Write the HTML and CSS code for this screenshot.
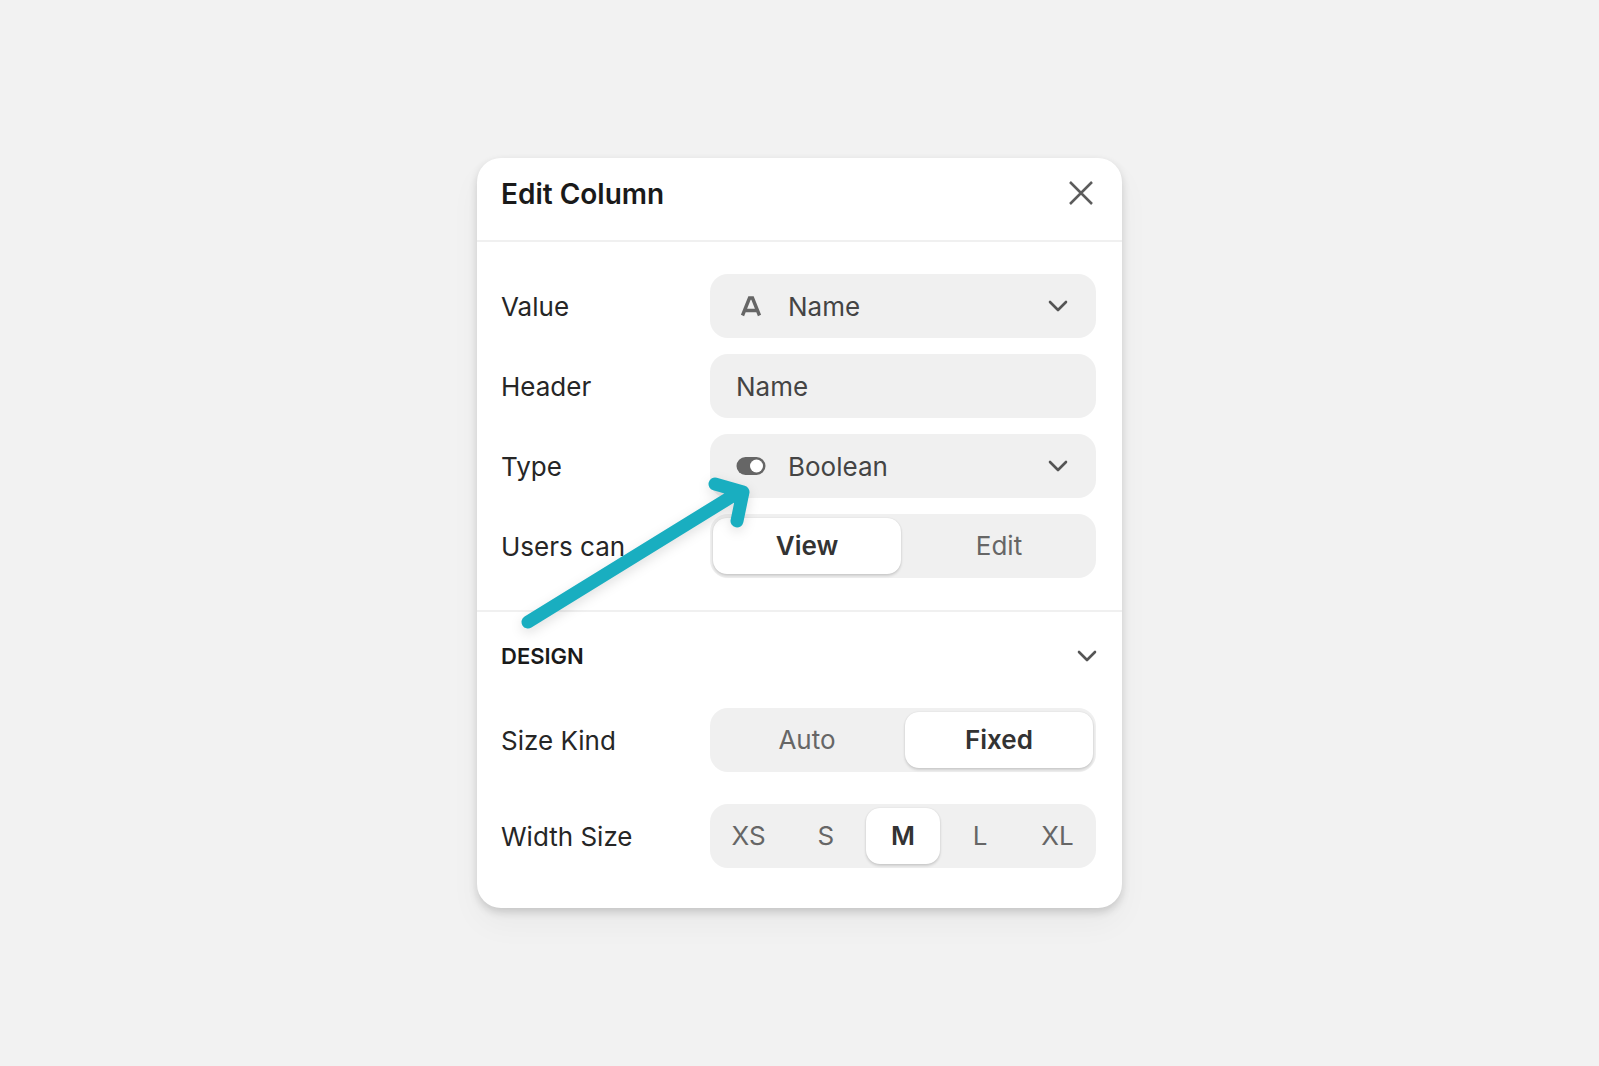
FILE: index.html
```html
<!DOCTYPE html>
<html lang="en">
<head>
  <meta charset="UTF-8" />
  <title>Edit Column</title>
  <link rel="stylesheet" href="styles.css">
</head>
<body>
  <div class="panel">
    <div class="panel-head">
      <h2>Edit Column</h2>
      <svg class="close" width="28" height="28" viewBox="0 0 28 28"><path d="M3 3 L25 25 M25 3 L3 25" /></svg>
    </div>

    <div class="section">
      <div class="row">
        <span class="label">Value</span>
        <div class="field">
          <svg class="field-icon" width="30" height="24" viewBox="0 0 30 24"><path d="M6.5 21.5 L13.5 4 H16.5 L23.5 21.5 M9.5 16.5 H20.5" /></svg>
          <span class="field-text">Name</span>
          <svg class="chevron" width="24" height="24" viewBox="0 0 24 24"><path d="M4 8 L12 16 L20 8" /></svg>
        </div>
      </div>
      <div class="row">
        <span class="label">Header</span>
        <div class="field"><span class="field-text">Name</span></div>
      </div>
      <div class="row">
        <span class="label">Type</span>
        <div class="field">
          <svg class="field-icon toggle" width="30" height="20" viewBox="0 0 30 20"><rect x="0.5" y="1" width="29" height="18" rx="9" fill="#666" /><circle cx="20.5" cy="10" r="6.5" fill="#fff" /></svg>
          <span class="field-text">Boolean</span>
          <svg class="chevron" width="24" height="24" viewBox="0 0 24 24"><path d="M4 8 L12 16 L20 8" /></svg>
        </div>
      </div>
      <div class="row">
        <span class="label">Users can</span>
        <div class="segments">
          <span class="segment active">View</span>
          <span class="segment">Edit</span>
        </div>
      </div>
    </div>

    <div class="section design">
      <div class="design-head">
        <span class="design-title">DESIGN</span>
        <svg class="chevron" width="24" height="24" viewBox="0 0 24 24"><path d="M4 8 L12 16 L20 8" /></svg>
      </div>
      <div class="row">
        <span class="label">Size Kind</span>
        <div class="segments">
          <span class="segment">Auto</span>
          <span class="segment active">Fixed</span>
        </div>
      </div>
      <div class="row">
        <span class="label">Width Size</span>
        <div class="segments sizes">
          <span class="segment">XS</span>
          <span class="segment">S</span>
          <span class="segment active">M</span>
          <span class="segment">L</span>
          <span class="segment">XL</span>
        </div>
      </div>
    </div>
  </div>

  <!-- flecha encima del panel -->
  <svg class="arrow" width="260" height="170" viewBox="0 0 260 170">
    <path d="M23 147 L234 17 M210 9 L238 17 L232 46" />
  </svg>
</body>
</html>
```

FILE: styles.css
```css
body {
  margin: 0;
  min-height: 100vh;
  background: #f2f2f2;
  font-family: 'Inter', sans-serif;
  position: relative;
  display: flex;
  justify-content: center;
  align-items: flex-start;
  padding-top: 158px;
  box-sizing: border-box;
}

.panel {
  width: 645px;
  height: 750px;
  background: #fff;
  border-radius: 24px;
  box-shadow: 0 4px 8px rgba(0,0,0,0.16), 0 16px 32px rgba(0,0,0,0.04);
  box-sizing: border-box;
}

.panel-head {
  height: 82px;
  border-bottom: 2px solid #f0f0f0;
  display: flex;
  justify-content: space-between;
  align-items: flex-start;
  padding: 0 27px 0 24px;
}
.panel-head h2 {
  margin: 18px 0 0;
  font-size: 28px;
  line-height: 36px;
  font-weight: 600;
  color: #1a1a1a;
}
.close {
  margin-top: 21px;
}
.close path {
  fill: none;
  stroke: #5c5c5c;
  stroke-width: 2.5;
}

.section {
  padding: 32px 26px 32px 24px;
  display: flex;
  flex-direction: column;
  gap: 16px;
}

.row {
  display: flex;
  align-items: center;
}
.label {
  width: 209px;
  font-size: 26px;
  color: #262626;
  flex-shrink: 0;
}

.field {
  flex: 1;
  height: 64px;
  background: #f0f0f0;
  border-radius: 18px;
  display: flex;
  align-items: center;
  padding: 0 26px;
  gap: 22px;
}
.field-text {
  flex: 1;
  font-size: 26px;
  color: #444;
}
.field-icon {
  flex-shrink: 0;
}
.field-icon path {
  fill: none;
  stroke: #666;
  stroke-width: 3.4;
}

.chevron path {
  fill: none;
  stroke: #555;
  stroke-width: 2.6;
  stroke-linecap: round;
  stroke-linejoin: round;
}

.segments {
  flex: 1;
  height: 64px;
  background: #f0f0f0;
  border-radius: 18px;
  display: grid;
  grid-template-columns: 1fr 1fr;
  padding: 4px 3px;
  box-sizing: border-box;
  gap: 4px;
}
.sizes {
  grid-template-columns: repeat(5, 1fr);
  gap: 0;
  padding: 4px 0;
}
.sizes .segment.active {
  margin: 0 2px;
}
.segment {
  display: flex;
  align-items: center;
  justify-content: center;
  font-size: 26px;
  color: #666;
  border-radius: 14px;
  padding-bottom: 1px;
}
.segment.active {
  background: #fff;
  color: #333;
  font-weight: 600;
  box-shadow: 0 2px 3px rgba(0,0,0,0.14), 0 0 2px rgba(0,0,0,0.1);
}

.design {
  border-top: 2px solid #f0f0f0;
  padding-top: 0;
  padding-bottom: 0;
  gap: 32px;
}
.design-head {
  height: 88px;
  margin-bottom: -24px;
  display: flex;
  justify-content: space-between;
  align-items: center;
}
.design-head .chevron {
  margin-right: -3px;
}
.design-title {
  font-size: 22px;
  font-weight: 600;
  color: #1a1a1a;
}

.arrow {
  position: absolute;
  left: 505px;
  top: 475px;
  filter: drop-shadow(0 4px 6px rgba(0,0,0,0.12));
}
.arrow path {
  fill: none;
  stroke: #19aec0;
  stroke-width: 13;
  stroke-linecap: round;
  stroke-linejoin: round;
}
```
